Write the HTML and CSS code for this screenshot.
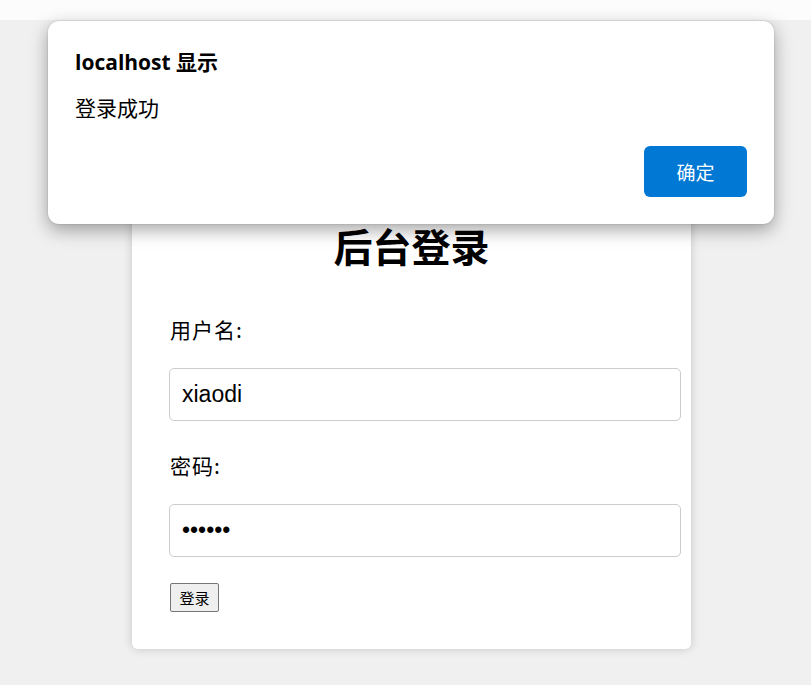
FILE: index.html
```html
<!DOCTYPE html>
<html lang="zh-CN">
<head>
<meta charset="utf-8">
<title>后台登录</title>
<link rel="stylesheet" href="styles.css">
</head>
<body>
<div class="topbar"></div>
<main class="page">
  <form class="card">
    <h1 class="title">后台登录</h1>
    <label class="label" for="u">用户名:</label>
    <input class="field" id="u" type="text" value="xiaodi">
    <label class="label" for="p">密码:</label>
    <input class="field" id="p" type="password" value="123456">
    <button class="submit" type="button">登录</button>
  </form>
</main>
<div class="dialog">
  <div class="dialog-title">localhost 显示</div>
  <div class="dialog-msg">登录成功</div>
  <div class="dialog-actions">
    <button class="dialog-ok" type="button">确定</button>
  </div>
</div>
</body>
</html>
```
FILE: styles.css
```css
html, body {
  margin: 0;
  padding: 0;
}
body {
  background: #f0f0f0;
  font-family: "Liberation Sans", "Noto Sans CJK SC", sans-serif;
  color: #000;
  min-height: 685px;
}
.topbar {
  height: 20px;
  background: #fcfcfc;
}
.page {
  display: flex;
  justify-content: center;
  padding-left: 12px;
  padding-top: 172px;
}
.card {
  width: 559px;
  box-sizing: border-box;
  background: #fff;
  padding: 37px;
  border-radius: 6px;
  box-shadow: 0 0 10px rgba(0, 0, 0, 0.18);
  display: flex;
  flex-direction: column;
  align-items: flex-start;
}
.title {
  align-self: stretch;
  margin: -3px 0 53px;
  text-align: center;
  font-family: "Noto Sans CJK SC", sans-serif;
  font-size: 39px;
  line-height: 38px;
  font-weight: 700;
}
.label {
  font-family: "Noto Sans CJK SC", sans-serif;
  font-size: 21px;
  letter-spacing: 1px;
  line-height: 24px;
  margin: 0 0 27px 1px;
}
.field {
  width: 512px;
  height: 53px;
  box-sizing: border-box;
  margin: 0 0 32px;
  padding: 0 12px;
  border: 1px solid #cccccc;
  border-radius: 5px;
  font-family: "Liberation Sans", sans-serif;
  font-size: 23px;
  color: #000;
  background: #fff;
  outline: none;
}
#p {
  margin-bottom: 26px;
}
.submit {
  margin-left: 1px;
  width: 49px;
  height: 29px;
  box-sizing: border-box;
  padding: 0;
  border: 1px solid #767676;
  border-radius: 2px;
  background: #efefef;
  font-family: "Noto Sans CJK SC", sans-serif;
  font-size: 15px;
  color: #000;
}
.dialog {
  position: absolute;
  left: 48px;
  top: 21px;
  width: 726px;
  height: 203px;
  box-sizing: border-box;
  background: #fff;
  border-radius: 11px;
  box-shadow: 0 6px 18px rgba(0, 0, 0, 0.35), 0 0 2px rgba(0, 0, 0, 0.2);
  padding: 27px;
  display: flex;
  flex-direction: column;
}
.dialog-title {
  font-family: "Open Sans", "Noto Sans CJK SC", sans-serif;
  font-weight: 700;
  font-size: 21px;
  line-height: 28px;
}
.dialog-msg {
  margin-top: 18px;
  font-family: "Noto Sans CJK SC", sans-serif;
  font-size: 21px;
  line-height: 26px;
}
.dialog-actions {
  margin-top: auto;
  display: flex;
  justify-content: flex-end;
}
.dialog-ok {
  width: 103px;
  height: 51px;
  border: none;
  border-radius: 6px;
  background: #0078d4;
  color: #fff;
  font-family: "Noto Sans CJK SC", sans-serif;
  font-size: 19px;
}
```
